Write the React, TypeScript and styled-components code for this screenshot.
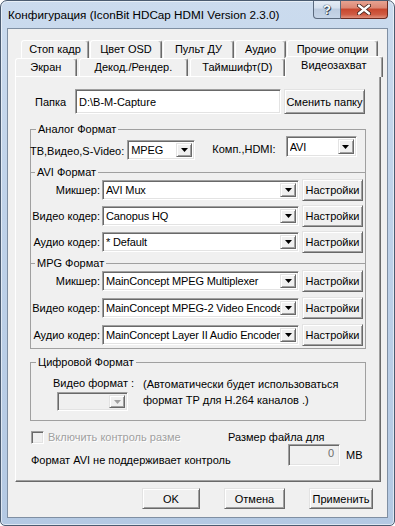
import React from "react";
import styled, { createGlobalStyle, css } from "styled-components";

const GlobalStyle = createGlobalStyle`
  html, body {
    margin: 0;
    padding: 0;
    background: #ffffff;
  }
  body {
    font-family: "Liberation Sans", Arial, sans-serif;
    font-size: 11px;
    color: #000000;
  }
  * {
    box-sizing: border-box;
  }
`;

// classic 3D edges
const raised = css`
  background: #f0f0f0;
  border: 1px solid;
  border-color: #e3e3e3 #696969 #696969 #e3e3e3;
  box-shadow: inset 1px 1px 0 #ffffff, inset -1px -1px 0 #a0a0a0;
`;

const sunken = css`
  border: 1px solid;
  border-color: #a0a0a0 #ffffff #ffffff #a0a0a0;
  box-shadow: inset 1px 1px 0 #696969, inset -1px -1px 0 #e3e3e3;
`;

const Window = styled.div`
  width: 395px;
  height: 526px;
  border: 1px solid #4b5b70;
  border-radius: 7px 7px 5px 5px;
  background: linear-gradient(180deg, #cbdbee 0%, #bfd2e9 40%, #b4c9e3 100%);
  box-shadow: inset 0 0 0 1px rgba(255, 255, 255, 0.55);
  display: flex;
  flex-direction: column;
  overflow: hidden;
`;

const TitleBar = styled.div`
  height: 27px;
  display: flex;
  align-items: flex-start;
  flex-shrink: 0;
`;

const Title = styled.div`
  padding-left: 7px;
  line-height: 28px;
  font-size: 11.7px;
  color: #000000;
  white-space: nowrap;
`;

const CaptionButtons = styled.div`
  margin-left: auto;
  margin-right: 6px;
  margin-top: -1px;
  display: flex;
  height: 19px;
`;

const CaptionButton = styled.div<{ $close?: boolean }>`
  width: ${(p) => (p.$close ? 47 : 28)}px;
  height: 19px;
  border: 1px solid #5b6a7e;
  border-top: none;
  display: flex;
  align-items: center;
  justify-content: center;
  font-weight: bold;
  font-size: 13px;
  color: #ffffff;
  text-shadow: 0 0 1px #2c3a4c, 0 0 1px #2c3a4c, 1px 1px 0 #3b4a5e;
  ${(p) =>
    p.$close
      ? css`
          border-left: none;
          border-radius: 0 0 4px 0;
          border-color: #6b2a20;
          background: linear-gradient(180deg, #e9a796 0%, #dc8672 45%, #c7462d 50%, #cf5b43 80%, #e0907c 100%);
        `
      : css`
          border-radius: 0 0 0 4px;
          background: linear-gradient(180deg, #e6edf6 0%, #d5e0ee 45%, #bccbdf 50%, #c6d5e8 100%);
        `}
`;

const Client = styled.div`
  flex: 1;
  margin: 0 6px 7px 6px;
  border: 1px solid #7f8fa3;
  background: #f0f0f0;
  display: flex;
  flex-direction: column;
`;

const TabControl = styled.div`
  margin: 11px 0 0 7px;
  width: 366px;
`;

const TabRow = styled.div<{ $indent: number; $gap: number }>`
  display: flex;
  height: 18px;
  padding-left: ${(p) => p.$indent}px;
  gap: ${(p) => p.$gap}px;
  align-items: flex-end;
`;

const Tab = styled.div<{ $w: number; $active?: boolean }>`
  width: ${(p) => p.$w}px;
  height: 18px;
  background: #f0f0f0;
  border: 1px solid;
  border-bottom: none;
  border-color: #ffffff #696969 transparent #ffffff;
  border-radius: 3px 3px 0 0;
  box-shadow: inset -1px 0 0 #a0a0a0;
  text-align: center;
  line-height: 17px;
  white-space: nowrap;
  ${(p) =>
    p.$active &&
    css`
      position: relative;
      z-index: 1;
      height: 21px;
      margin: 0 -2px -1px -2px;
      width: ${p.$w + 3}px;
      line-height: 16px;
    `}
`;

const Panel = styled.div`
  height: 406px;
  border: 1px solid;
  border-color: #ffffff #696969 #696969 #ffffff;
  box-shadow: inset -1px -1px 0 #a0a0a0;
  display: flex;
  flex-direction: column;
`;

const FolderRow = styled.div`
  display: flex;
  align-items: center;
  margin-top: 12px;
  padding-left: 19px;
  height: 25px;
`;

const Label = styled.span<{ $w?: number; $right?: boolean; $ml?: number }>`
  display: inline-block;
  white-space: nowrap;
  ${(p) => p.$w !== undefined && `width: ${p.$w}px;`}
  ${(p) => p.$right && `text-align: right;`}
  ${(p) => p.$ml !== undefined && `margin-left: ${p.$ml}px;`}
`;

const TextBox = styled.div<{ $w: number; $h: number; $disabled?: boolean }>`
  ${sunken};
  width: ${(p) => p.$w}px;
  height: ${(p) => p.$h}px;
  background: ${(p) => (p.$disabled ? "#f0f0f0" : "#ffffff")};
  display: flex;
  align-items: center;
  padding-left: 3px;
  white-space: nowrap;
  overflow: hidden;
`;

const Button = styled.div<{ $w: number; $h?: number; $ml?: number }>`
  ${raised};
  width: ${(p) => p.$w}px;
  height: ${(p) => p.$h ?? 22}px;
  margin-left: ${(p) => p.$ml ?? 0}px;
  display: flex;
  align-items: center;
  justify-content: center;
  white-space: nowrap;
  flex-shrink: 0;
`;

const GroupBox = styled.fieldset<{ $mt: number; $pb: number }>`
  margin: ${(p) => p.$mt}px 0 0 14px;
  width: 336px;
  padding: 0 0 ${(p) => p.$pb}px 0;
  border: 1px solid #a0a0a0;
  min-width: 0;
`;

const SubGroup = styled.fieldset<{ $mt: number }>`
  margin: ${(p) => p.$mt}px 0 0 0;
  padding: 0;
  border: none;
  border-top: 1px solid #a0a0a0;
  min-width: 0;
`;

const Legend = styled.legend<{ $ml: number }>`
  margin-left: ${(p) => p.$ml}px;
  padding: 0 2px;
  line-height: 13px;
  font-size: 11px;
`;

const FormatRow = styled.div`
  display: flex;
  align-items: flex-start;
  height: 24px;
`;

const FormatLabel = styled.span<{ $mt: number; $ml: number }>`
  margin-top: ${(p) => p.$mt}px;
  margin-left: ${(p) => p.$ml}px;
  white-space: nowrap;
  line-height: 13px;
`;

const ComboBox = styled.div<{ $w: number; $h?: number; $mt?: number; $ml?: number; $disabled?: boolean }>`
  ${sunken};
  width: ${(p) => p.$w}px;
  height: ${(p) => p.$h ?? 20}px;
  margin-top: ${(p) => p.$mt ?? 0}px;
  margin-left: ${(p) => p.$ml ?? 0}px;
  background: ${(p) => (p.$disabled ? "#f0f0f0" : "#ffffff")};
  display: flex;
  align-items: center;
  padding: 2px 2px 2px 3px;
  flex-shrink: 0;
`;

const ComboText = styled.span`
  flex: 1;
  overflow: hidden;
  white-space: nowrap;
  letter-spacing: -0.15px;
`;

const ArrowButton = styled.div`
  ${raised};
  width: 16px;
  height: 100%;
  display: flex;
  align-items: center;
  justify-content: center;
  flex-shrink: 0;
`;

const CodecRow = styled.div<{ $mt: number }>`
  display: flex;
  align-items: center;
  height: 22px;
  margin-top: ${(p) => p.$mt}px;
`;

const DigitalBody = styled.div`
  display: flex;
  align-items: flex-start;
  margin-top: 8px;
  padding-left: 22px;
`;

const DigitalColumn = styled.div`
  display: flex;
  flex-direction: column;
  width: 90px;
`;

const DigitalNote = styled.div`
  line-height: 16px;
  margin-top: -1px;
`;

const CheckRow = styled.div`
  display: flex;
  align-items: center;
  margin-top: 9px;
  padding-left: 15px;
  height: 14px;
`;

const CheckBox = styled.div`
  ${sunken};
  width: 13px;
  height: 13px;
  background: #f0f0f0;
  flex-shrink: 0;
`;

const DisabledText = styled.span`
  color: #a0a0a0;
  text-shadow: 1px 1px 0 #ffffff;
  margin-left: 4px;
  width: 176px;
  white-space: nowrap;
  overflow: hidden;
`;

const SizeRow = styled.div`
  display: flex;
  align-items: center;
  padding-left: 15px;
  height: 22px;
`;

const SizeNote = styled.span`
  width: 257px;
  margin-top: 10px;
  white-space: nowrap;
`;

const SizeField = styled.div`
  ${sunken};
  width: 52px;
  height: 22px;
  background: #f0f0f0;
  color: #6d6d6d;
  text-align: right;
  padding: 2px 5px 0 0;
  line-height: 13px;
`;

const ButtonBar = styled.div`
  display: flex;
  justify-content: flex-end;
  gap: 24px;
  margin-top: 6px;
  padding-right: 14px;
`;

const Arrow = ({ disabled }: { disabled?: boolean }) => (
  <svg width="7" height="4" viewBox="0 0 7 4">
    <path d="M0 0h7L3.5 4z" fill={disabled ? "#a0a0a0" : "#000000"} />
  </svg>
);

const Combo = ({
  value,
  w,
  h,
  mt,
  ml,
  disabled,
}: {
  value: string;
  w: number;
  h?: number;
  mt?: number;
  ml?: number;
  disabled?: boolean;
}) => (
  <ComboBox $w={w} $h={h} $mt={mt} $ml={ml} $disabled={disabled}>
    <ComboText>{value}</ComboText>
    <ArrowButton>
      <Arrow disabled={disabled} />
    </ArrowButton>
  </ComboBox>
);

const CodecLine = ({ label, value, mt }: { label: string; value: string; mt: number }) => (
  <CodecRow $mt={mt}>
    <Label $w={69} $right>
      {label}
    </Label>
    <Combo value={value} w={197} ml={2} />
    <Button $w={61} $ml={3}>
      Настройки
    </Button>
  </CodecRow>
);

const topTabs = [
  { title: "Стоп кадр", w: 68 },
  { title: "Цвет OSD", w: 72 },
  { title: "Пульт ДУ", w: 71 },
  { title: "Аудио", w: 51 },
  { title: "Прочие опции", w: 91 },
];

const frontTabs = [
  { title: "Экран", w: 62 },
  { title: "Декод./Рендер.", w: 110 },
  { title: "Таймшифт(D)", w: 95 },
  { title: "Видеозахват", w: 96, active: true },
];

const App: React.FC = () => {
  return (
    <>
      <GlobalStyle />
      <Window>
        <TitleBar>
          <Title>Конфигурация (IconBit HDCap HDMI Version 2.3.0)</Title>
          <CaptionButtons>
            <CaptionButton>?</CaptionButton>
            <CaptionButton $close>
              <svg width="14" height="11" viewBox="0 0 14 11">
                <path d="M2 1.5L12 9.5M12 1.5L2 9.5" stroke="#3a1a14" strokeWidth="4" strokeLinecap="round" />
                <path d="M2 1.5L12 9.5M12 1.5L2 9.5" stroke="#ffffff" strokeWidth="2.4" strokeLinecap="round" />
              </svg>
            </CaptionButton>
          </CaptionButtons>
        </TitleBar>
        <Client>
          <TabControl>
            <TabRow $indent={6} $gap={1}>
              {topTabs.map((t) => (
                <Tab key={t.title} $w={t.w}>
                  {t.title}
                </Tab>
              ))}
            </TabRow>
            <TabRow $indent={0} $gap={2}>
              {frontTabs.map((t) => (
                <Tab key={t.title} $w={t.w} $active={t.active}>
                  {t.title}
                </Tab>
              ))}
            </TabRow>
            <Panel>
              <FolderRow>
                <Label $w={40}>Папка</Label>
                <TextBox $w={206} $h={25}>
                  D:\B-M-Capture
                </TextBox>
                <Button $w={81} $h={25} $ml={3}>
                  Сменить папку
                </Button>
              </FolderRow>

              <GroupBox $mt={9} $pb={2}>
                <Legend $ml={5}>Аналог Формат</Legend>
                <FormatRow>
                  <FormatLabel $mt={9} $ml={-1}>
                    ТВ,Видео,S-Video:
                  </FormatLabel>
                  <Combo value="MPEG" w={68} mt={4} ml={3} />
                  <FormatLabel $mt={7} $ml={17}>
                    Комп.,HDMI:
                  </FormatLabel>
                  <Combo value="AVI" w={71} h={21} mt={0} ml={10} />
                </FormatRow>

                <SubGroup $mt={6}>
                  <Legend $ml={4}>AVI Формат</Legend>
                  <CodecLine label="Микшер:" value="AVI Mux" mt={0} />
                  <CodecLine label="Видео кодер:" value="Canopus HQ" mt={4} />
                  <CodecLine label="Аудио кодер:" value="* Default" mt={4} />
                </SubGroup>

                <SubGroup $mt={4}>
                  <Legend $ml={4}>MPG Формат</Legend>
                  <CodecLine label="Микшер:" value="MainConcept MPEG Multiplexer" mt={0} />
                  <CodecLine label="Видео кодер:" value="MainConcept MPEG-2 Video Encoder" mt={5} />
                  <CodecLine label="Аудио кодер:" value="MainConcept Layer II Audio Encoder" mt={5} />
                </SubGroup>
              </GroupBox>

              <GroupBox $mt={7} $pb={9}>
                <Legend $ml={5}>Цифровой Формат</Legend>
                <DigitalBody>
                  <DigitalColumn>
                    <Label>Видео формат :</Label>
                    <Combo value="" w={71} h={19} mt={3} ml={4} disabled />
                  </DigitalColumn>
                  <DigitalNote>
                    (Автоматически будет использоваться
                    <br />
                    формат TP для H.264 каналов .)
                  </DigitalNote>
                </DigitalBody>
              </GroupBox>

              <CheckRow>
                <CheckBox />
                <DisabledText>Включить контроль разме</DisabledText>
                <Label $ml={4}>Размер файла для</Label>
              </CheckRow>
              <SizeRow>
                <SizeNote>Формат AVI не поддерживает контроль</SizeNote>
                <SizeField>0</SizeField>
                <Label $ml={6}>MB</Label>
              </SizeRow>
            </Panel>
          </TabControl>
          <ButtonBar>
            <Button $w={58} $h={21}>
              OK
            </Button>
            <Button $w={61} $h={21}>
              Отмена
            </Button>
            <Button $w={64} $h={21}>
              Применить
            </Button>
          </ButtonBar>
        </Client>
      </Window>
    </>
  );
};

export default App;
